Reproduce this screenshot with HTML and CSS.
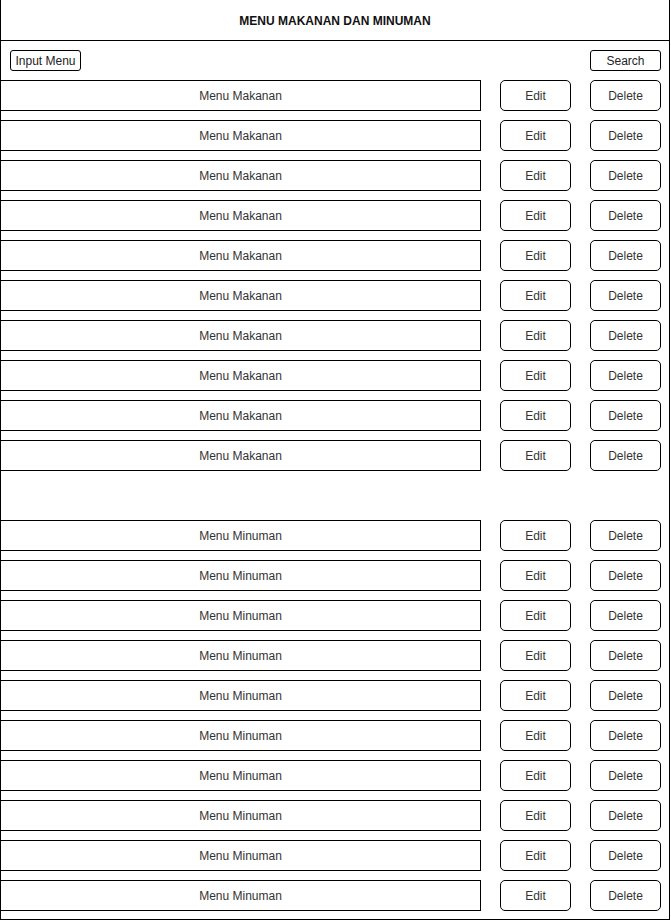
FILE: index.html
```html
<!DOCTYPE html>
<html>
<head>
<meta charset="utf-8">
<link rel="stylesheet" href="styles.css">
</head>
<body>
<div class="frame">
  <div class="header">MENU MAKANAN DAN MINUMAN</div>
  <div class="content">
    <div class="toolbar">
      <div class="btn small">Input Menu</div>
      <div class="btn small">Search</div>
    </div>
    <div class="group">
      <div class="row"><div class="item">Menu Makanan</div><div class="btn">Edit</div><div class="btn">Delete</div></div>
      <div class="row"><div class="item">Menu Makanan</div><div class="btn">Edit</div><div class="btn">Delete</div></div>
      <div class="row"><div class="item">Menu Makanan</div><div class="btn">Edit</div><div class="btn">Delete</div></div>
      <div class="row"><div class="item">Menu Makanan</div><div class="btn">Edit</div><div class="btn">Delete</div></div>
      <div class="row"><div class="item">Menu Makanan</div><div class="btn">Edit</div><div class="btn">Delete</div></div>
      <div class="row"><div class="item">Menu Makanan</div><div class="btn">Edit</div><div class="btn">Delete</div></div>
      <div class="row"><div class="item">Menu Makanan</div><div class="btn">Edit</div><div class="btn">Delete</div></div>
      <div class="row"><div class="item">Menu Makanan</div><div class="btn">Edit</div><div class="btn">Delete</div></div>
      <div class="row"><div class="item">Menu Makanan</div><div class="btn">Edit</div><div class="btn">Delete</div></div>
      <div class="row"><div class="item">Menu Makanan</div><div class="btn">Edit</div><div class="btn">Delete</div></div>
    </div>
    <div class="group minuman">
      <div class="row"><div class="item">Menu Minuman</div><div class="btn">Edit</div><div class="btn">Delete</div></div>
      <div class="row"><div class="item">Menu Minuman</div><div class="btn">Edit</div><div class="btn">Delete</div></div>
      <div class="row"><div class="item">Menu Minuman</div><div class="btn">Edit</div><div class="btn">Delete</div></div>
      <div class="row"><div class="item">Menu Minuman</div><div class="btn">Edit</div><div class="btn">Delete</div></div>
      <div class="row"><div class="item">Menu Minuman</div><div class="btn">Edit</div><div class="btn">Delete</div></div>
      <div class="row"><div class="item">Menu Minuman</div><div class="btn">Edit</div><div class="btn">Delete</div></div>
      <div class="row"><div class="item">Menu Minuman</div><div class="btn">Edit</div><div class="btn">Delete</div></div>
      <div class="row"><div class="item">Menu Minuman</div><div class="btn">Edit</div><div class="btn">Delete</div></div>
      <div class="row"><div class="item">Menu Minuman</div><div class="btn">Edit</div><div class="btn">Delete</div></div>
      <div class="row"><div class="item">Menu Minuman</div><div class="btn">Edit</div><div class="btn">Delete</div></div>
    </div>
  </div>
</div>
</body>
</html>
```

FILE: styles.css
```css
html, body {
  margin: 0;
  padding: 0;
  background: #fff;
}
body {
  font-family: "Liberation Sans", Arial, sans-serif;
  font-size: 12px;
  color: #333;
}
.frame {
  box-sizing: border-box;
  width: 670px;
  height: 920px;
  border-left: 1px solid #000;
  border-right: 1px solid #000;
  border-bottom: 1px solid #000;
}
.header {
  box-sizing: border-box;
  height: 41px;
  border-bottom: 1px solid #000;
  display: flex;
  align-items: center;
  justify-content: center;
  font-weight: bold;
  color: #111;
  padding-top: 1px;
}
.content {
  display: flex;
  flex-direction: column;
  gap: 9px;
  padding-top: 9px;
}
.toolbar {
  display: flex;
  justify-content: space-between;
  padding: 0 8px 0 9px;
}
.group {
  display: flex;
  flex-direction: column;
  gap: 9px;
}
.group.minuman {
  margin-top: 40px;
}
.row {
  display: flex;
  gap: 19px;
  height: 31px;
}
.item {
  box-sizing: border-box;
  width: 480px;
  height: 31px;
  border: 1px solid #000;
  border-left: none;
  display: flex;
  align-items: center;
  justify-content: center;
}
.btn {
  box-sizing: border-box;
  width: 71px;
  height: 31px;
  border: 1px solid #000;
  border-radius: 5px;
  display: flex;
  align-items: center;
  justify-content: center;
}
.btn.small {
  height: 21px;
  border-radius: 3px;
  color: #222;
}
```
